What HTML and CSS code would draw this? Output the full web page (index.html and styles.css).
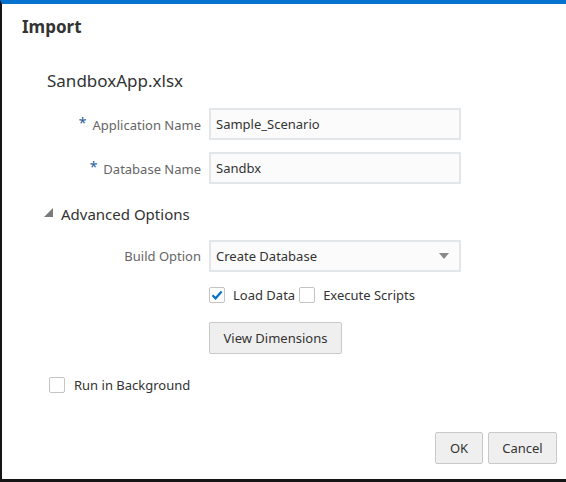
FILE: index.html
```html
<!DOCTYPE html>
<html>
<head>
<meta charset="utf-8">
<title>Import</title>
<link rel="stylesheet" href="styles.css">
</head>
<body>
<div class="dialog">
  <header class="dlg-header"><h1 class="dlg-title">Import</h1></header>
  <div class="dlg-body">
    <div class="file-name">SandboxApp.xlsx</div>
    <div class="form-grid">
      <label class="field-label"><span class="req">*</span>Application Name</label>
      <div class="text-input">Sample_Scenario</div>
      <label class="field-label"><span class="req">*</span>Database Name</label>
      <div class="text-input">Sandbx</div>
    </div>
    <div class="disclosure">
      <svg class="disc-icon" width="10" height="10" viewBox="0 0 10 10"><polygon points="9,0 9,9 0,9" fill="#7a7a7a"/></svg>
      <span>Advanced Options</span>
    </div>
    <div class="form-grid adv-grid">
      <label class="field-label">Build Option</label>
      <div class="text-input select">
        <span>Create Database</span>
        <svg width="10" height="6" viewBox="0 0 10 6"><polygon points="0,0 10,0 5,6" fill="#8a8a8a"/></svg>
      </div>
      <div></div>
      <div class="check-row">
        <span class="checkbox checked"><svg width="14" height="14" viewBox="0 0 14 14"><path d="M2.5 7.2 L5.6 10.3 L11.6 3.6" fill="none" stroke="#0572ce" stroke-width="2.2"/></svg></span>
        <span class="check-text">Load Data</span>
        <span class="checkbox"></span>
        <span class="check-text">Execute Scripts</span>
      </div>
      <div></div>
      <div class="btn-cell"><button class="btn btn-view">View Dimensions</button></div>
    </div>
    <div class="check-row bg-row">
      <span class="checkbox"></span>
      <span class="check-text">Run in Background</span>
    </div>
  </div>
  <footer class="dlg-footer">
    <button class="btn btn-ok">OK</button>
    <button class="btn btn-cancel">Cancel</button>
  </footer>
</div>
</body>
</html>
```
FILE: styles.css
```css
html, body {
  margin: 0;
  padding: 0;
  background: #ffffff;
}
body {
  font-family: "Noto Sans", "Open Sans", "Liberation Sans", sans-serif;
  color: #333333;
}
.dialog {
  width: 566px;
  height: 482px;
  box-sizing: border-box;
  border-top: 4px solid #0572ce;
  border-left: 2px solid #151515;
  border-bottom: 3px solid #151515;
  display: flex;
  flex-direction: column;
}
.dlg-header {
  padding: 11px 20px 0;
}
.dlg-title {
  margin: 0;
  font-size: 17px;
  line-height: 24px;
  font-weight: 700;
  color: #333;
}
.dlg-body {
  display: flex;
  flex-direction: column;
}
.file-name {
  margin: 30px 0 0 45px;
  font-size: 17px;
  line-height: 24px;
  color: #333;
}
.form-grid {
  margin-top: 15px;
  display: grid;
  grid-template-columns: 199px 252px;
  column-gap: 8px;
  row-gap: 12px;
  align-items: center;
}
.field-label {
  text-align: right;
  font-size: 13px;
  color: #666;
  line-height: 18px;
}
.req {
  color: #1f5c99;
  font-size: 14px;
  vertical-align: 2px;
  margin-right: 6px;
}
.text-input {
  height: 32px;
  box-sizing: border-box;
  border: 2px solid #e3e6e8;
  background: #fbfbfb;
  padding: 0 10px 0 5px;
  font-size: 13px;
  color: #333;
  display: flex;
  align-items: center;
}
.select {
  justify-content: space-between;
}
.disclosure {
  margin: 19px 0 0 42px;
  display: flex;
  align-items: center;
  gap: 7px;
  font-size: 15px;
  line-height: 22px;
  color: #333;
}
.disc-icon {
  margin-bottom: 2px;
}
.adv-grid {
  row-gap: 15px;
}
.check-row {
  display: flex;
  align-items: center;
  height: 16px;
  font-size: 13px;
  color: #333;
}
.checkbox {
  width: 16px;
  height: 16px;
  box-sizing: border-box;
  border: 1px solid #c4c4c4;
  border-radius: 2px;
  background: #fff;
  display: flex;
  align-items: center;
  justify-content: center;
  flex: none;
}
.check-text {
  margin: 0 4px 0 8px;
}
.btn-cell {
  margin-top: 4px;
}
.btn {
  height: 32px;
  box-sizing: border-box;
  border: 1px solid #c9c9c9;
  border-radius: 2px;
  background: #efefef;
  font-family: inherit;
  font-size: 13px;
  color: #333;
  padding: 0 12px;
}
.btn-view {
  width: 133px;
  padding: 0;
}
.bg-row {
  margin: 23px 0 0 47px;
}
.bg-row .check-text {
  margin-left: 9px;
}
.dlg-footer {
  margin-top: auto;
  display: flex;
  justify-content: flex-end;
  gap: 5px;
  padding: 0 9px 15px 0;
}
.btn-ok {
  width: 48px;
  padding: 0;
}
.btn-cancel {
  width: 69px;
  padding: 0;
}
```
